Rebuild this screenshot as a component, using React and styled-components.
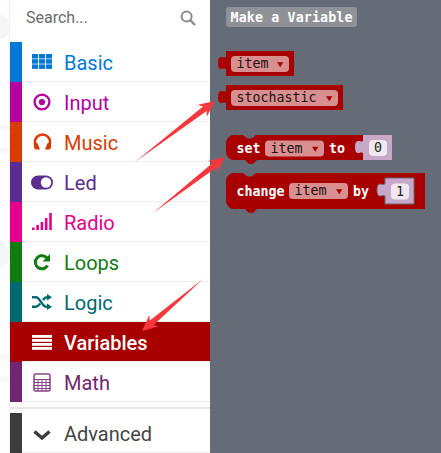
import React from 'react';
import styled, { createGlobalStyle } from 'styled-components';

const Global = createGlobalStyle`
  html, body { margin: 0; padding: 0; background: #fff; }
  body { width: 441px; height: 453px; overflow: hidden; font-family: Roboto, "Liberation Sans", sans-serif; }
`;

const Page = styled.div`
  position: relative;
  width: 441px;
  height: 453px;
  display: flex;
  overflow: hidden;
`;
const Gutter = styled.div`
  width: 9px;
  flex: none;
  background-color: #fefefe;
  background-image:
    radial-gradient(circle 13px at -3px 27px, #f6f6f6 98%, transparent 100%),
    radial-gradient(circle 13px at -3px 255px, #f6f6f6 98%, transparent 100%),
    linear-gradient(#f7f7f7, #f7f7f7),
    linear-gradient(#f7f7f7, #f7f7f7),
    linear-gradient(#f7f7f7, #f7f7f7),
    linear-gradient(#f7f7f7, #f7f7f7);
  background-repeat: no-repeat;
  background-size: auto, auto, 9px 5px, 9px 5px, 9px 6px, 9px 5px;
  background-position: 0 0, 0 0, 0 125px, 0 148px, 0 354px, 0 377px;
  border-right: 1px solid #efefef;
`;
const Sidebar = styled.div`
  width: 200px;
  flex: none;
  background: #fff;
  display: flex;
  flex-direction: column;
`;
const SearchBar = styled.div`
  height: 42px;
  flex: none;
  display: flex;
  align-items: center;
  justify-content: space-between;
  padding: 0 14px 7px 16px;
  box-sizing: border-box;
  font-size: 16px;
  color: #6b6b6b;
`;
const Row = styled.div`
  height: 40px;
  flex: none;
  box-sizing: border-box;
  display: flex;
  align-items: center;
  border-bottom: 1px solid #ececec;
  color: ${p => (p.$active ? '#fff' : p.$color)};
  background: ${p => (p.$active ? p.$color : '#fff')};
  font-size: 20px;
  font-weight: ${p => (p.$active ? 500 : 400)};
`;
const Strip = styled.div`
  width: 12px;
  align-self: stretch;
  flex: none;
  margin-bottom: -1px;
  background: ${p => p.$color};
`;
const IconBox = styled.div`
  width: 42px;
  flex: none;
  display: flex;
  justify-content: center;
  padding: 1px 2px 0 0;
  box-sizing: border-box;
  svg { display: block; }
`;
const Label = styled.span`
  line-height: 1;
  padding-top: 3px;
`;
const Divider = styled.div`
  height: 2px;
  flex: none;
  margin-top: 5px;
  margin-bottom: 4px;
  background: #e6e6e6;
`;
const Flyout = styled.div`
  flex: 1;
  background: #656b77;
`;
const Workspace = styled.svg`
  display: block;
  text {
    font-family: "DejaVu Sans Mono", monospace;
    font-size: 13.3px;
  }
`;
const Overlay = styled.svg`
  position: absolute;
  left: 0;
  top: 0;
  pointer-events: none;
`;

const Grid = ({ c }) => (
  <svg width="20" height="16" viewBox="0 0 20 16" fill={c}>
    {[0, 5.2, 10.4].map(y => [0, 7, 14].map(x => <rect key={x + '-' + y} x={x} y={y} width="6" height="4.5" />))}
  </svg>
);
const Target = ({ c }) => (
  <svg width="18" height="18" viewBox="0 0 18 18">
    <circle cx="9" cy="9" r="7.4" fill="none" stroke={c} strokeWidth="2.3" />
    <circle cx="9" cy="9" r="3.1" fill={c} />
  </svg>
);
const Phones = ({ c }) => (
  <svg width="19" height="18" viewBox="0 0 19 18" fill="none">
    <path d="M2 11.5 V9 a7.5 7.5 0 0 1 15 0 V11.5" stroke={c} strokeWidth="2.6" />
    <path d="M1 10 h3.4 l2.6 6.5 h-3.2 a2.8 2.8 0 0 1 -2.8 -2.8z M18 10 h-3.4 l-2.6 6.5 h3.2 a2.8 2.8 0 0 0 2.8 -2.8z" fill={c} />
  </svg>
);
const Toggle = ({ c }) => (
  <svg width="22" height="15" viewBox="0 0 22 15">
    <rect x="0" y="0.5" width="22" height="14" rx="7" fill={c} />
    <circle cx="15" cy="7.5" r="5.2" fill="#fff" />
  </svg>
);
const Bars = ({ c }) => (
  <svg width="20" height="18" viewBox="0 0 20 18" fill={c}>
    <rect x="0" y="14.5" width="2.6" height="2.5" />
    <rect x="4.3" y="12" width="2.6" height="5" />
    <rect x="8.6" y="9" width="2.6" height="8" />
    <rect x="12.9" y="5" width="2.6" height="12" />
    <rect x="17.2" y="0" width="2.6" height="17" />
  </svg>
);
const Redo = ({ c }) => (
  <svg width="18" height="18" viewBox="0 0 18 18" fill="none">
    <path d="M14 5 A6.6 6.6 0 1 0 14.6 12.6" stroke={c} strokeWidth="3" />
    <path d="M17 1 V8.4 H9.6z" fill={c} />
  </svg>
);
const Shuffle = ({ c }) => (
  <svg width="20" height="16" viewBox="0 0 20 16" fill="none">
    <path d="M0 3.2 H4 C8 3.2 10 12.8 14.5 12.8 H16 M0 12.8 H4 C6 12.8 7 11 8 9.5 M11 6 C12 4.5 13 3.2 15 3.2 H16" stroke={c} strokeWidth="2.4" />
    <path d="M15 0 L20 3.2 15 6.4z M15 9.6 L20 12.8 15 16z" fill={c} />
  </svg>
);
const Lines = ({ c }) => (
  <svg width="20" height="15" viewBox="0 0 20 15" fill={c}>
    {[0, 4, 8, 12].map(y => <rect key={y} x="0" y={y} width="20" height="2.8" />)}
  </svg>
);
const Calc = ({ c }) => (
  <svg width="18" height="19" viewBox="0 0 18 19">
    <rect x="1" y="1" width="16" height="17" rx="1.5" fill="none" stroke={c} strokeWidth="1.5" opacity="0.85" />
    <path d="M1 6.5 H17 M1 9.5 H17 M1 12.5 H17 M1 15.5 H17 M5 6.5 V18 M9 6.5 V18 M13 6.5 V18" stroke={c} strokeWidth="1" opacity="0.85" />
  </svg>
);
const Chevron = ({ c }) => (
  <svg width="18" height="16" viewBox="0 0 18 16" fill="none">
    <path d="M1.5 6.5 L9 13 L16.5 6.5" stroke={c} strokeWidth="3.4" />
  </svg>
);
const Magnifier = () => (
  <svg width="16" height="16" viewBox="0 0 16 16" fill="none" stroke="#8c8c8c">
    <circle cx="6.6" cy="6.6" r="5" strokeWidth="2" />
    <path d="M10.4 10.4 L15 15" strokeWidth="2.4" />
  </svg>
);

const cats = [
  ['Basic', '#0078d7', Grid],
  ['Input', '#b4009e', Target],
  ['Music', '#d83b01', Phones],
  ['Led', '#5c2d91', Toggle],
  ['Radio', '#e3008c', Bars],
  ['Loops', '#107c10', Redo],
  ['Logic', '#006970', Shuffle],
  ['Variables', '#a80000', Lines, true],
  ['Math', '#712672', Calc],
];

const RED = '#a80000';
const PINK = '#d98f8f';

const Dropdown = ({ x, y, w, h = 16, label }) => (
  <g>
    <rect x={x} y={y} width={w} height={h} rx="4" fill={PINK} />
    <text x={x + 5.5} y={y + 12} fill="#1c1010">{label}</text>
    <path d={`M${x + w - 12} ${y + 6.2} h6.4 l-3.2 5z`} fill={RED} />
  </g>
);
const Word = ({ x, y, children }) => (
  <text x={x} y={y} fill="#fff" fontWeight="700">{children}</text>
);
const Reporter = ({ y, w, h, label }) => (
  <g>
    <path d={`M226 ${y} H${226 + w} V${y + h} H226 V${y + 18} c-2 -1 -3 0 -5 0 c-2 0 -3 -2 -3 -6 s1 -6 3 -6 c2 0 3 1 5 0z`} fill={RED} />
    <Dropdown x={231} y={y + 5} w={w - 10} label={label} />
  </g>
);
const stackPath = (right, top, bottom) =>
  `M234 ${top} H243 l3 2.5 q1 1 2 1 h3 q1 0 2 -1 l3 -2.5 H${right} V${bottom} H257 l-3 3 q-1 1 -2 1 h-2 q-1 0 -2 -1 l-3 -3 H234 a8 8 0 0 1 -8 -8 V${top + 8} a8 8 0 0 1 8 -8z`;
const NumberInput = ({ x, y, w, h, value, stroke }) => (
  <g>
    <path
      d={`M${x} ${y} H${x + w} V${y + h} H${x} V${y + 18} c-2 -1 -3 0 -5 0 c-2 0 -3 -2 -3 -6 s1 -6 3 -6 c2 0 3 1 5 0z`}
      fill="#c8a8c9"
      stroke={stroke || 'none'}
      strokeWidth={stroke ? 1 : 0}
    />
    <rect x={x + 6} y={y + h / 2 - 7.5} width={18} height={16} rx="4" fill="#efe8f0" />
    <text x={x + 11} y={y + h / 2 + 4.7} fill="#222">{value}</text>
  </g>
);

const arrowPoints = (tx, ty, hx, hy, head = 16, hw = 7.5, sw = 3) => {
  const L = Math.hypot(hx - tx, hy - ty);
  const ux = (hx - tx) / L;
  const uy = (hy - ty) / L;
  const nx = -uy;
  const ny = ux;
  const bx = hx - ux * head;
  const by = hy - uy * head;
  const ix = hx - ux * head * 0.8;
  const iy = hy - uy * head * 0.8;
  const pts = [
    [tx, ty],
    [ix + nx * sw, iy + ny * sw],
    [bx + nx * hw, by + ny * hw],
    [hx, hy],
    [bx - nx * hw, by - ny * hw],
    [ix - nx * sw, iy - ny * sw],
  ];
  return pts.map(p => p.map(v => v.toFixed(1)).join(',')).join(' ');
};

export default function App() {
  return (
    <Page>
      <Global />
      <Gutter />
      <Sidebar>
        <SearchBar>
          <span>Search...</span>
          <Magnifier />
        </SearchBar>
        {cats.map(([name, color, Icon, active]) => (
          <Row key={name} $color={color} $active={active}>
            <Strip $color={color} />
            <IconBox><Icon c={active ? '#fff' : color} /></IconBox>
            <Label>{name}</Label>
          </Row>
        ))}
        <Divider />
        <Row $color="#444">
          <Strip $color="#3c3c3c" />
          <IconBox><Chevron c="#3c3c3c" /></IconBox>
          <Label>Advanced</Label>
        </Row>
      </Sidebar>
      <Flyout>
        <Workspace width="231" height="453" viewBox="210 0 231 453">
          <rect x="226" y="7" width="131" height="20" rx="3" fill="#8e9196" />
          <text x="230.5" y="22" fill="#fff" fontWeight="700" textLength="122">Make a Variable</text>
          <Reporter y={51} w={68} h={25} label="item" />
          <Reporter y={85} w={117} h={25} label="stochastic" />
          <path d={stackPath(363, 135, 160)} fill={RED} />
          <Word x={236.5} y={153}>set</Word>
          <Dropdown x={265} y={140.5} w={59} label="item" />
          <Word x={329} y={153}>to</Word>
          <NumberInput x={363} y={135} w={29} h={25} value="0" />
          <path d={stackPath(425, 173, 209)} fill={RED} />
          <Word x={236.5} y={196}>change</Word>
          <Dropdown x={289} y={183} w={59} label="item" />
          <Word x={353} y={196}>by</Word>
          <NumberInput x={385} y={178} w={29} h={26} value="1" stroke="#686872" />
        </Workspace>
      </Flyout>
      <Overlay width="441" height="453" viewBox="0 0 441 453">
        <polygon points={arrowPoints(135, 162, 215, 101)} fill="#f5383b" />
        <polygon points={arrowPoints(153, 213, 225, 157)} fill="#f5383b" />
        <polygon points={arrowPoints(203, 279, 142, 331)} fill="#f5383b" />
      </Overlay>
    </Page>
  );
}
